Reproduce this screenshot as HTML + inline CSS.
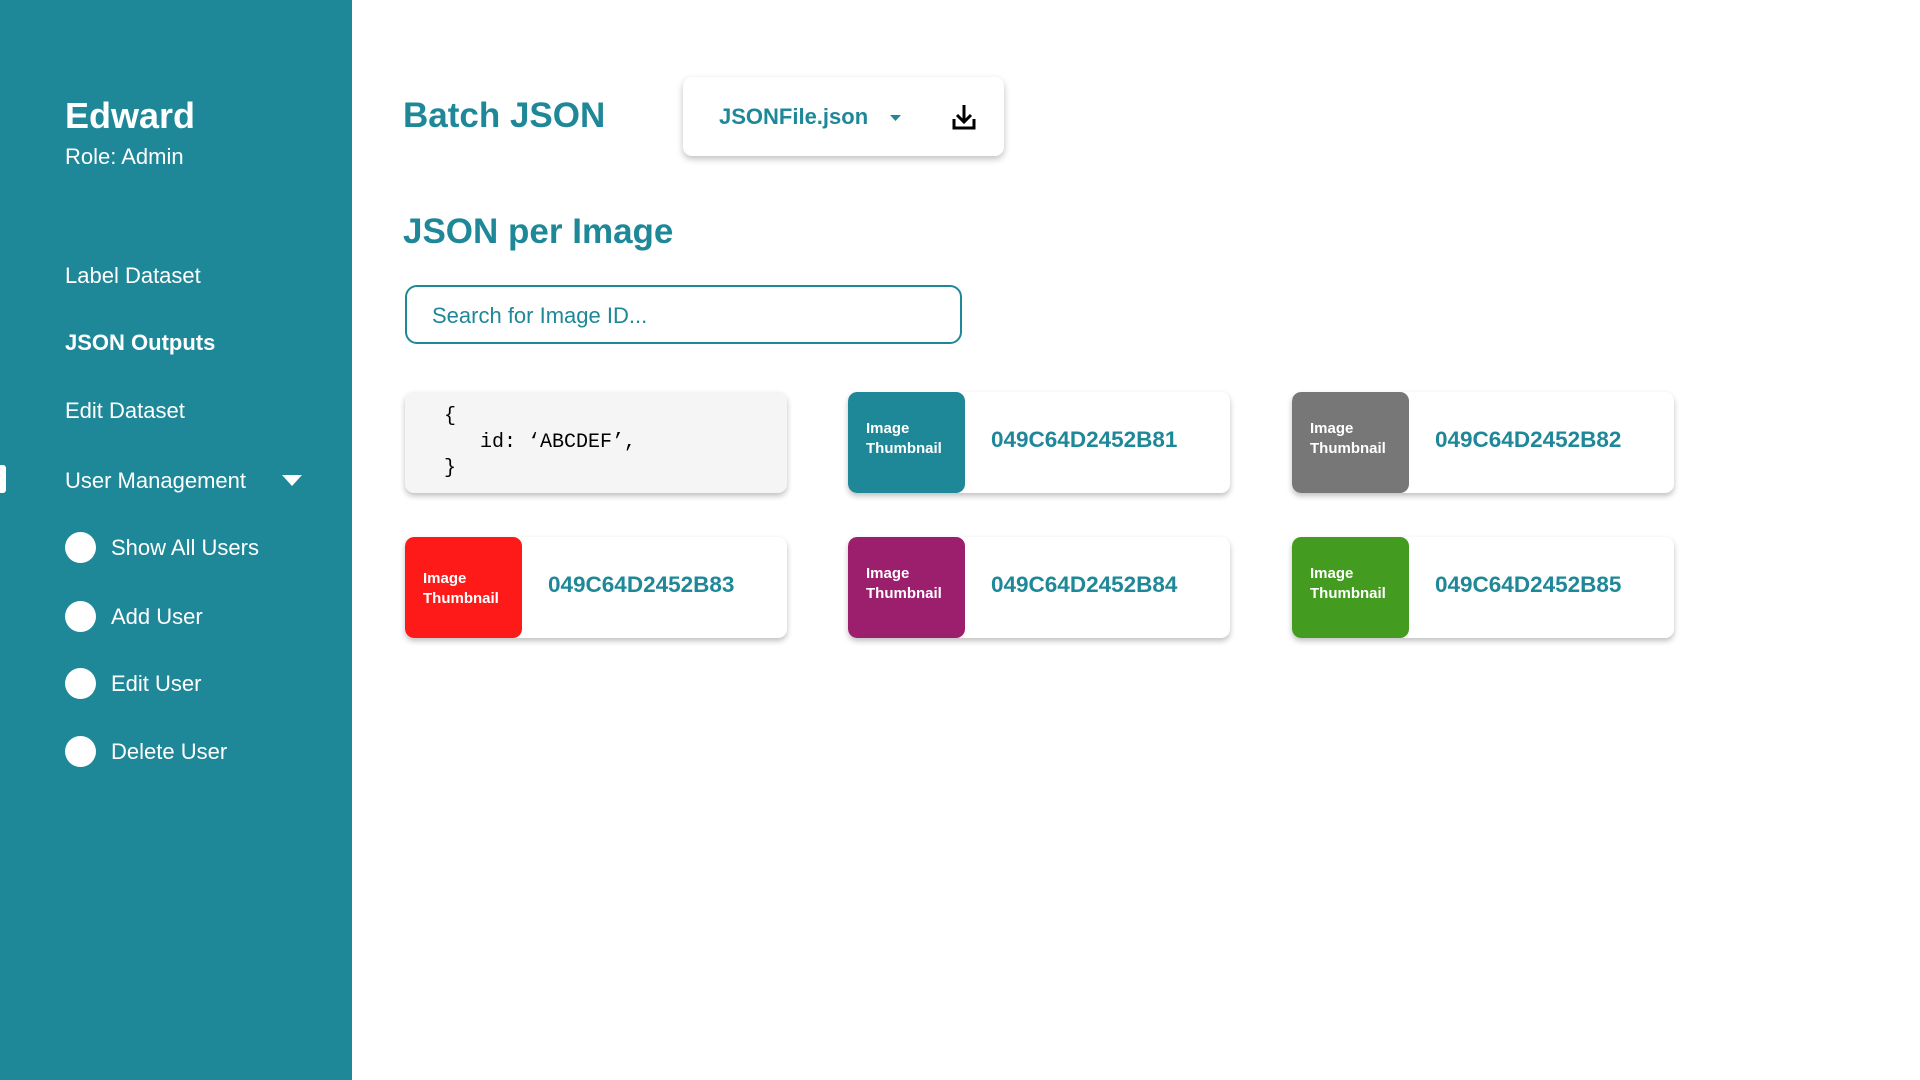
<!DOCTYPE html>
<html><head><meta charset="utf-8"><style>
*{margin:0;padding:0;box-sizing:border-box}
body{width:1920px;height:1080px;background:#fff;font-family:"Liberation Sans",sans-serif;position:relative;overflow:hidden}
.sb{position:absolute;left:0;top:0;width:352px;height:1080px;background:#1e8898;color:#fff}
.a{position:absolute;white-space:nowrap}
.nav{font-size:22px;left:65px}
.dot{position:absolute;left:65px;width:31px;height:31px;border-radius:50%;background:#fff}
.card{position:absolute;width:382px;height:101px;border-radius:9px;background:#fff;box-shadow:0 3px 6px rgba(0,0,0,.25);overflow:hidden}
.th{position:absolute;left:0;top:0;width:117px;height:101px;border-radius:9px;color:#fff;font-size:15px;font-weight:bold;padding-left:18px;line-height:20px;display:flex;flex-direction:column;justify-content:center;padding-bottom:8px}
.id{position:absolute;left:143px;top:0;line-height:95px;font-size:22.5px;font-weight:bold;color:#1e8898}
.teal{color:#1e8898}
</style></head><body>
<div class="sb">
<div class="a" style="left:65px;top:95px;font-size:36px;font-weight:bold">Edward</div>
<div class="a" style="left:65px;top:144px;font-size:22px">Role: Admin</div>
<div class="a nav" style="top:263px">Label Dataset</div>
<div class="a nav" style="top:330px;font-weight:bold">JSON Outputs</div>
<div class="a nav" style="top:398px">Edit Dataset</div>
<div class="a nav" style="top:468px">User Management</div>
<svg class="a" style="left:282px;top:475px" width="20" height="12"><path d="M0 0H20L10 11Z" fill="#fff"/></svg>
<div class="a" style="left:0;top:465px;width:6px;height:28px;background:#fff;border-radius:0 3px 3px 0"></div>
<div class="dot" style="top:532px"></div><div class="a nav" style="left:111px;top:535px">Show All Users</div>
<div class="dot" style="top:601px"></div><div class="a nav" style="left:111px;top:604px">Add User</div>
<div class="dot" style="top:668px"></div><div class="a nav" style="left:111px;top:671px">Edit User</div>
<div class="dot" style="top:736px"></div><div class="a nav" style="left:111px;top:739px">Delete User</div>
</div>
<div class="a teal" style="left:403px;top:96px;font-size:35px;font-weight:bold">Batch JSON</div>
<div class="a" style="left:683px;top:77px;width:321px;height:79px;border-radius:9px;background:#fff;box-shadow:0 3px 7px rgba(0,0,0,.25)"></div>
<div class="a teal" style="left:719px;top:104px;font-size:22px;font-weight:bold">JSONFile.json</div>
<svg class="a" style="left:890px;top:115px" width="11" height="7"><path d="M0 0H11L5.5 6Z" fill="#1e8898"/></svg>
<svg class="a" style="left:952px;top:104px" width="24" height="26"><path d="M12 1V17M5 11L12 18L19 11" stroke="#000" stroke-width="3" fill="none"/><path d="M2 15V24H22V15" stroke="#000" stroke-width="3" fill="none"/></svg>
<div class="a teal" style="left:403px;top:212px;font-size:35px;font-weight:bold">JSON per Image</div>
<div class="a" style="left:405px;top:285px;width:557px;height:59px;border:2px solid #1e8898;border-radius:12px"></div>
<div class="a teal" style="left:432px;top:303px;font-size:22px">Search for Image ID...</div>
<div class="card" style="left:405px;top:392px;background:#f5f5f5">
<pre style="position:absolute;left:39px;top:12px;font-family:'Liberation Mono',monospace;font-size:20px;line-height:26px;color:#000">{
   id: ‘ABCDEF’,
}</pre></div>
<div class="card" style="left:848px;top:392px"><div class="th" style="background:#1e8898">Image<br>Thumbnail</div><div class="id">049C64D2452B81</div></div>
<div class="card" style="left:1292px;top:392px"><div class="th" style="background:#777">Image<br>Thumbnail</div><div class="id">049C64D2452B82</div></div>
<div class="card" style="left:405px;top:537px"><div class="th" style="background:#ff1a1a;padding-bottom:0;padding-top:2px">Image<br>Thumbnail</div><div class="id" style="line-height:96px">049C64D2452B83</div></div>
<div class="card" style="left:848px;top:537px"><div class="th" style="background:#9c1f6e">Image<br>Thumbnail</div><div class="id" style="line-height:96px">049C64D2452B84</div></div>
<div class="card" style="left:1292px;top:537px"><div class="th" style="background:#439b20">Image<br>Thumbnail</div><div class="id" style="line-height:96px">049C64D2452B85</div></div>
</body></html>
